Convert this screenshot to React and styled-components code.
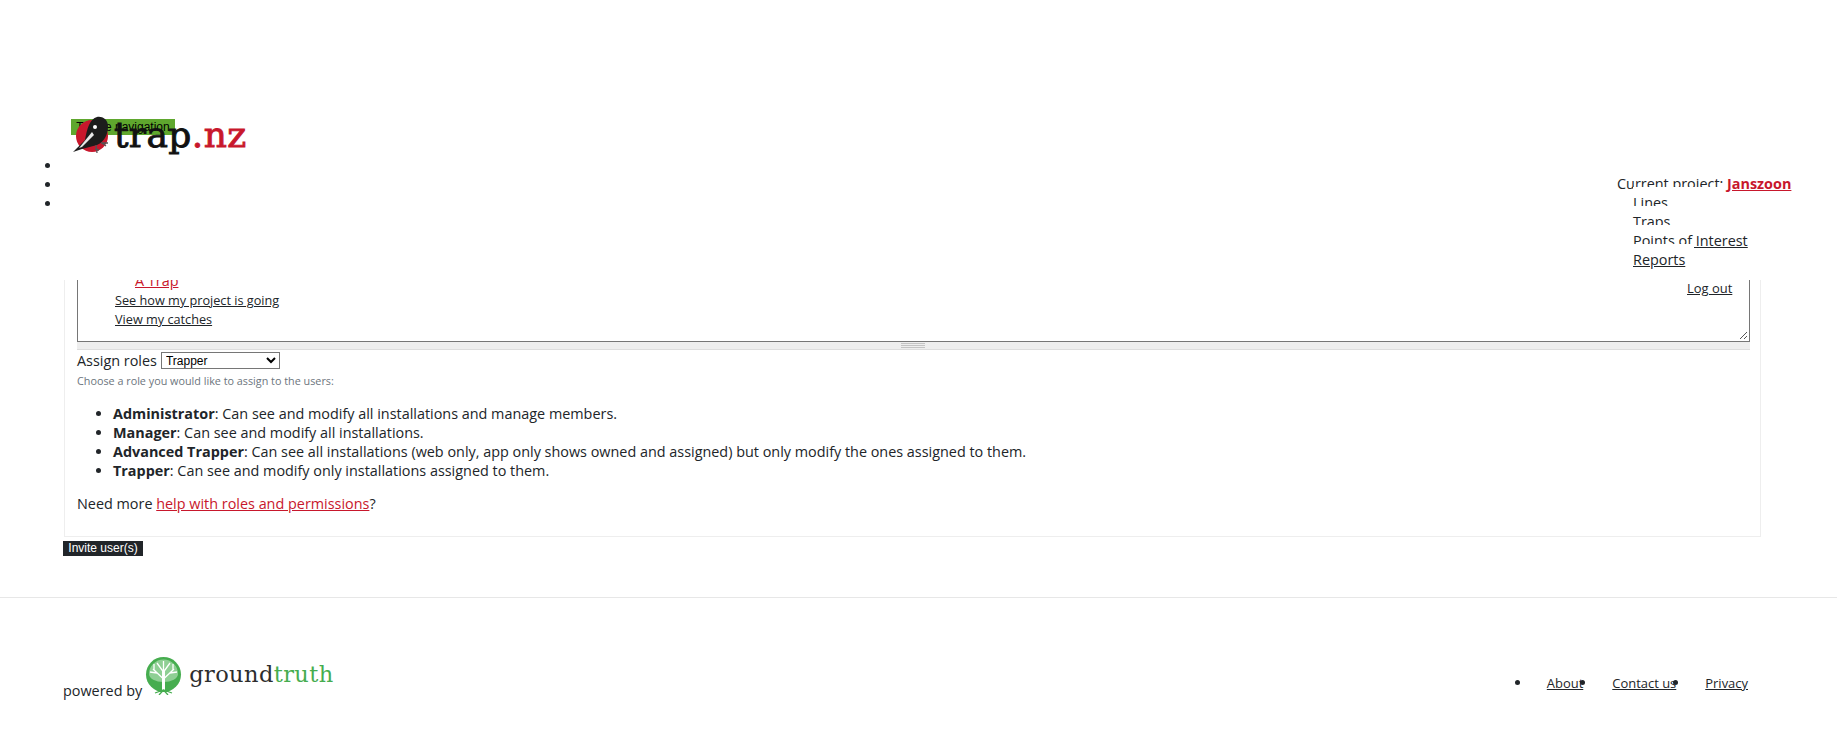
import React from 'react';
import styled, { createGlobalStyle } from 'styled-components';

const GlobalStyle = createGlobalStyle`
  html, body {
    margin: 0;
    padding: 0;
    background: #fff;
  }
  body {
    font-family: "Open Sans", sans-serif;
    font-size: 14.4px;
    line-height: 19px;
    color: #212529;
  }
`;

const Header = styled.header`
  position: relative;
  height: 280px;
  background: #fff;
`;

const LogoLink = styled.a`
  position: absolute;
  left: 70px;
  top: 114px;
  display: flex;
  align-items: center;
  color: #000;
  text-decoration: none;
`;

const LogoText = styled.span`
  font-family: "DejaVu Serif", serif;
  font-size: 36px;
  line-height: 42px;
  letter-spacing: 0.4px;
  color: #111;
  -webkit-text-stroke: 0.9px currentColor;
  margin: 0 0 0 4px;
`;

const LogoAccent = styled.span`
  color: #c8172c;
`;

const ToggleNav = styled.button`
  position: absolute;
  left: 71px;
  top: 119px;
  width: 104px;
  height: 16px;
  padding: 0;
  border: 0;
  background: #5fa72e;
  color: #000;
  font-family: "Liberation Sans", Arial, sans-serif;
  font-size: 12px;
  line-height: 16px;
  white-space: nowrap;
`;

const EmptyNav = styled.ul`
  position: absolute;
  left: 62px;
  top: 156px;
  margin: 0;
  padding: 0;
`;

const EmptyItem = styled.li`
  height: 19px;
`;

const ProjectNav = styled.nav`
  position: absolute;
  left: 1617px;
  top: 174px;
  width: 200px;
`;

const ProjectName = styled.a`
  font-weight: 700;
  color: #c8172c;
  text-decoration: underline;
`;

const ProjectList = styled.div`
  padding-left: 16px;
`;

// every row paints white over the foot of the row above it
const ProjectLink = styled.a`
  display: block;
  position: relative;
  width: ${(p) => p.$cover}px;
  height: 19px;
  white-space: nowrap;
  color: #212529;
  text-decoration: underline;
  background: #fff;
  box-shadow: 0 -6px 0 #fff;
`;

const LogOut = styled.a`
  display: block;
  margin: 10px 0 0 70px;
  font-size: 12.96px;
  color: #212529;
  text-decoration: underline;
`;

const Main = styled.main`
  padding: 0 76px 0 64px;
`;

const Card = styled.section`
  border: 1px solid #eee;
  border-top: 0;
  padding: 0 10px 0 12px;
  height: 256px;
`;

const EditorArea = styled.div`
  height: 61px;
  overflow: hidden;
  border: 1px solid #767676;
  border-top: 0;
  position: relative;
  padding-left: 37px;
  font-size: 12.7px;
`;

const ClippedLine = styled.div`
  margin: -9px 0 1px;
  padding-left: 20px;
  font-size: 14.4px;
`;

const EditorLink = styled.a`
  display: block;
  color: ${(p) => (p.$accent ? '#c8172c' : '#212529')};
  text-decoration: underline;
`;

const ResizeHandle = styled.svg`
  position: absolute;
  right: 1px;
  bottom: 1px;
`;

const GripBar = styled.div`
  height: 8px;
  padding-right: 2px;
  box-sizing: border-box;
  background: #eee;
  border-bottom: 1px solid #ddd;
  display: flex;
  justify-content: center;
  align-items: flex-start;
`;

const Grip = styled.span`
  width: 24px;
  height: 5px;
  margin-top: 1px;
  background: repeating-linear-gradient(#c4c4c4 0 1px, #eee 1px 2px);
`;

const AssignRow = styled.div`
  margin-top: 1px;
  display: flex;
  align-items: center;
  gap: 4px;
  height: 19px;
`;

const RoleSelect = styled.select`
  width: 119px;
  height: 17px;
  padding: 0;
  font-family: "Liberation Sans", Arial, sans-serif;
  font-size: 12px;
  color: #000;
  background: #fff;
  border: 1px solid #767676;
  border-radius: 0;
`;

const HelpText = styled.p`
  margin: 1px 0 0;
  font-size: 10.8px;
  line-height: 19px;
  color: #6c757d;
`;

const RoleList = styled.ul`
  margin: 14px 0 0;
  padding-left: 36px;
`;

const NeedMore = styled.p`
  margin: 14px 0 0;
`;

const RedLink = styled.a`
  color: #c8172c;
  text-decoration: underline;
`;

const InviteButton = styled.button`
  display: block;
  margin: 4px 0 0 -1px;
  width: 80px;
  height: 15px;
  padding: 0;
  border: 0;
  background: #212529;
  color: #fff;
  font-family: "Liberation Sans", Arial, sans-serif;
  font-size: 12px;
  line-height: 15px;
`;

const Footer = styled.footer`
  margin-top: 41px;
  border-top: 1px solid #e7e7e7;
  height: 133px;
  padding: 58px 75px 0 63px;
  display: flex;
  justify-content: space-between;
  box-sizing: border-box;
`;

const Powered = styled.div`
  display: flex;
  align-items: flex-end;
  height: 44px;
`;

const PoweredLabel = styled.span`
  padding-bottom: 0;
`;

const GroundLogo = styled.svg`
  margin: 0 0 5px 3px;
`;

const GroundText = styled.span`
  font-family: "DejaVu Serif", serif;
  font-size: 22.5px;
  line-height: 30px;
  letter-spacing: 0.4px;
  color: #2d2d2d;
  margin: 0 0 11px 7px;
`;

const GroundAccent = styled.span`
  color: #46ad4f;
`;

const FooterList = styled.ul`
  list-style: disc;
  display: flex;
  margin: 17px 0 0;
  padding: 0;
`;

const FooterItem = styled.li`
  padding: 0 14px 0 15px;
`;

const FooterLink = styled.a`
  font-size: 12.96px;
  color: #212529;
  text-decoration: underline;
`;

const Bird = () => (
  <svg width="40" height="42" viewBox="0 0 40 42">
    <circle cx="22" cy="22" r="16" fill="#c8172c" />
    <path d="M3 38 L15 26 C17 14 20 5 27 3 C34 2 38 7 38 12 C38 21 34 28 27 31 L12 35 Z" fill="#1c1c1c" />
    <path d="M22 18 L24 21 L12 33 L9 34 Z" fill="#e8e8e8" />
    <circle cx="25" cy="13" r="2" fill="#fff" />
    <path d="M26 31 L27 39 M25 35 L29 36 M31 29 L38 29 M32 29 L36 32" stroke="#555" strokeWidth="1.3" fill="none" />
  </svg>
);

const TreeLogo = () => (
  <GroundLogo width="37" height="38" viewBox="0 0 37 38">
    <circle cx="18.5" cy="17.5" r="17.5" fill="#46ad4f" />
    <path d="M4 17 A14.5 14.5 0 0 1 33 17 A14.5 8 0 0 1 4 17" fill="#8fcf94" />
    <path d="M18.5 33 L18.5 4 M18.5 22 L8 12 M18.5 22 L29 12 M18.5 15 L12 6 M18.5 15 L25 6 M12 16 L5 15 M25 16 L32 15 M9 13 L9 7 M28 13 L28 7" stroke="#fff" strokeWidth="1.3" fill="none" />
    <path d="M18.5 14 L18.5 33" stroke="#fff" strokeWidth="3" />
    <path d="M10 36 L18.5 33 L27 36 M14 38 L18.5 33 L23 38" stroke="#46ad4f" strokeWidth="1.3" fill="none" />
  </GroundLogo>
);

const App = () => {
  return (
    <>
      <GlobalStyle />
      <Header>
        <ToggleNav>Toggle navigation</ToggleNav>
        <LogoLink>
          <Bird />
          <LogoText>trap<LogoAccent>.nz</LogoAccent></LogoText>
        </LogoLink>
        <EmptyNav>
          <EmptyItem />
          <EmptyItem />
          <EmptyItem />
        </EmptyNav>
        <ProjectNav>
          <div>Current project: <ProjectName>Janszoon</ProjectName></div>
          <ProjectList>
            <ProjectLink $cover={92}>Lines</ProjectLink>
            <ProjectLink $cover={48}>Traps</ProjectLink>
            <ProjectLink $cover={60}>Points of Interest</ProjectLink>
            <ProjectLink $cover={61}>Reports</ProjectLink>
          </ProjectList>
          <LogOut>Log out</LogOut>
        </ProjectNav>
      </Header>
      <Main>
        <Card>
          <EditorArea>
            <ClippedLine><EditorLink $accent>A Trap</EditorLink></ClippedLine>
            <EditorLink>See how my project is going</EditorLink>
            <EditorLink>View my catches</EditorLink>
            <ResizeHandle width="10" height="10" viewBox="0 0 10 10">
              <path d="M9 2 L2 9 M9 6 L6 9" stroke="#555" strokeWidth="1" />
            </ResizeHandle>
          </EditorArea>
          <GripBar><Grip /></GripBar>
          <AssignRow>
            Assign roles
            <RoleSelect defaultValue="Trapper">
              <option>Trapper</option>
              <option>Advanced Trapper</option>
              <option>Manager</option>
              <option>Administrator</option>
            </RoleSelect>
          </AssignRow>
          <HelpText>Choose a role you would like to assign to the users:</HelpText>
          <RoleList>
            <li><b>Administrator</b>: Can see and modify all installations and manage members.</li>
            <li><b>Manager</b>: Can see and modify all installations.</li>
            <li><b>Advanced Trapper</b>: Can see all installations (web only, app only shows owned and assigned) but only modify the ones assigned to them.</li>
            <li><b>Trapper</b>: Can see and modify only installations assigned to them.</li>
          </RoleList>
          <NeedMore>Need more <RedLink>help with roles and permissions</RedLink>?</NeedMore>
        </Card>
        <InviteButton>Invite user(s)</InviteButton>
      </Main>
      <Footer>
        <Powered>
          <PoweredLabel>powered by</PoweredLabel>
          <TreeLogo />
          <GroundText>ground<GroundAccent>truth</GroundAccent></GroundText>
        </Powered>
        <FooterList>
          <FooterItem><FooterLink>About</FooterLink></FooterItem>
          <FooterItem><FooterLink>Contact us</FooterLink></FooterItem>
          <FooterItem><FooterLink>Privacy</FooterLink></FooterItem>
        </FooterList>
      </Footer>
    </>
  );
};

export default App;
